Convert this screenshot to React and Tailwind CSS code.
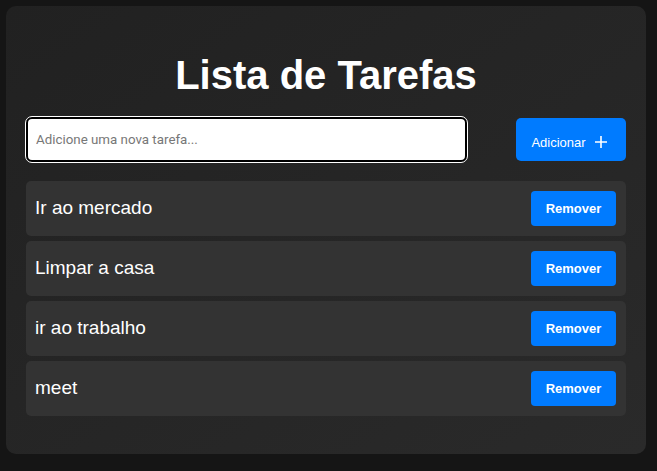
const TASKS = ['Ir ao mercado', 'Limpar a casa', 'ir ao trabalho', 'meet']

function PlusIcon() {
  return (
    <svg width="12" height="12" viewBox="0 0 12 12" fill="none" stroke="currentColor" strokeWidth="1.6">
      <path d="M6 0v12M0 6h12" />
    </svg>
  )
}

function TaskItem({ text }) {
  return (
    <li className="flex items-center justify-between h-[55px] pl-[9px] pr-[10px] rounded-[5px] bg-[#333333]">
      <span className="text-[19px] text-white">{text}</span>
      <button
        type="button"
        className="w-[85px] h-[35px] rounded-[4px] bg-[#007bff] text-white text-[13px] font-bold"
      >
        Remover
      </button>
    </li>
  )
}

export default function App() {
  return (
    <div className="min-h-[471px] bg-[#151515] p-[6px] font-['Liberation_Sans',Arial,sans-serif]">
      <div className="w-[640px] h-[448px] rounded-[10px] bg-gradient-to-br from-[#212121] to-[#2a2a2a] px-[20px] pt-[45px]">
        <h1 className="text-center text-white text-[40px] leading-[48px] font-bold">
          Lista de Tarefas
        </h1>
        <div className="mt-[18px] flex items-center justify-between">
          <input
            type="text"
            placeholder="Adicione uma nova tarefa..."
            className="w-[441px] h-[45px] rounded-[6px] bg-white border-2 border-black outline outline-1 outline-white px-[8px] text-[13.33px] font-['Roboto',sans-serif] text-black placeholder:text-[#777]"
          />
          <button
            type="button"
            className="w-[110px] h-[43px] rounded-[5px] bg-[#007bff] text-white text-[13px] flex items-center justify-center gap-[9px] pt-[7px] pr-[4px]"
          >
            Adicionar
            <span className="-mt-[2px]">
              <PlusIcon />
            </span>
          </button>
        </div>
        <ul className="mt-[19px] flex flex-col gap-[5px]">
          {TASKS.map((t) => (
            <TaskItem key={t} text={t} />
          ))}
        </ul>
      </div>
    </div>
  )
}
